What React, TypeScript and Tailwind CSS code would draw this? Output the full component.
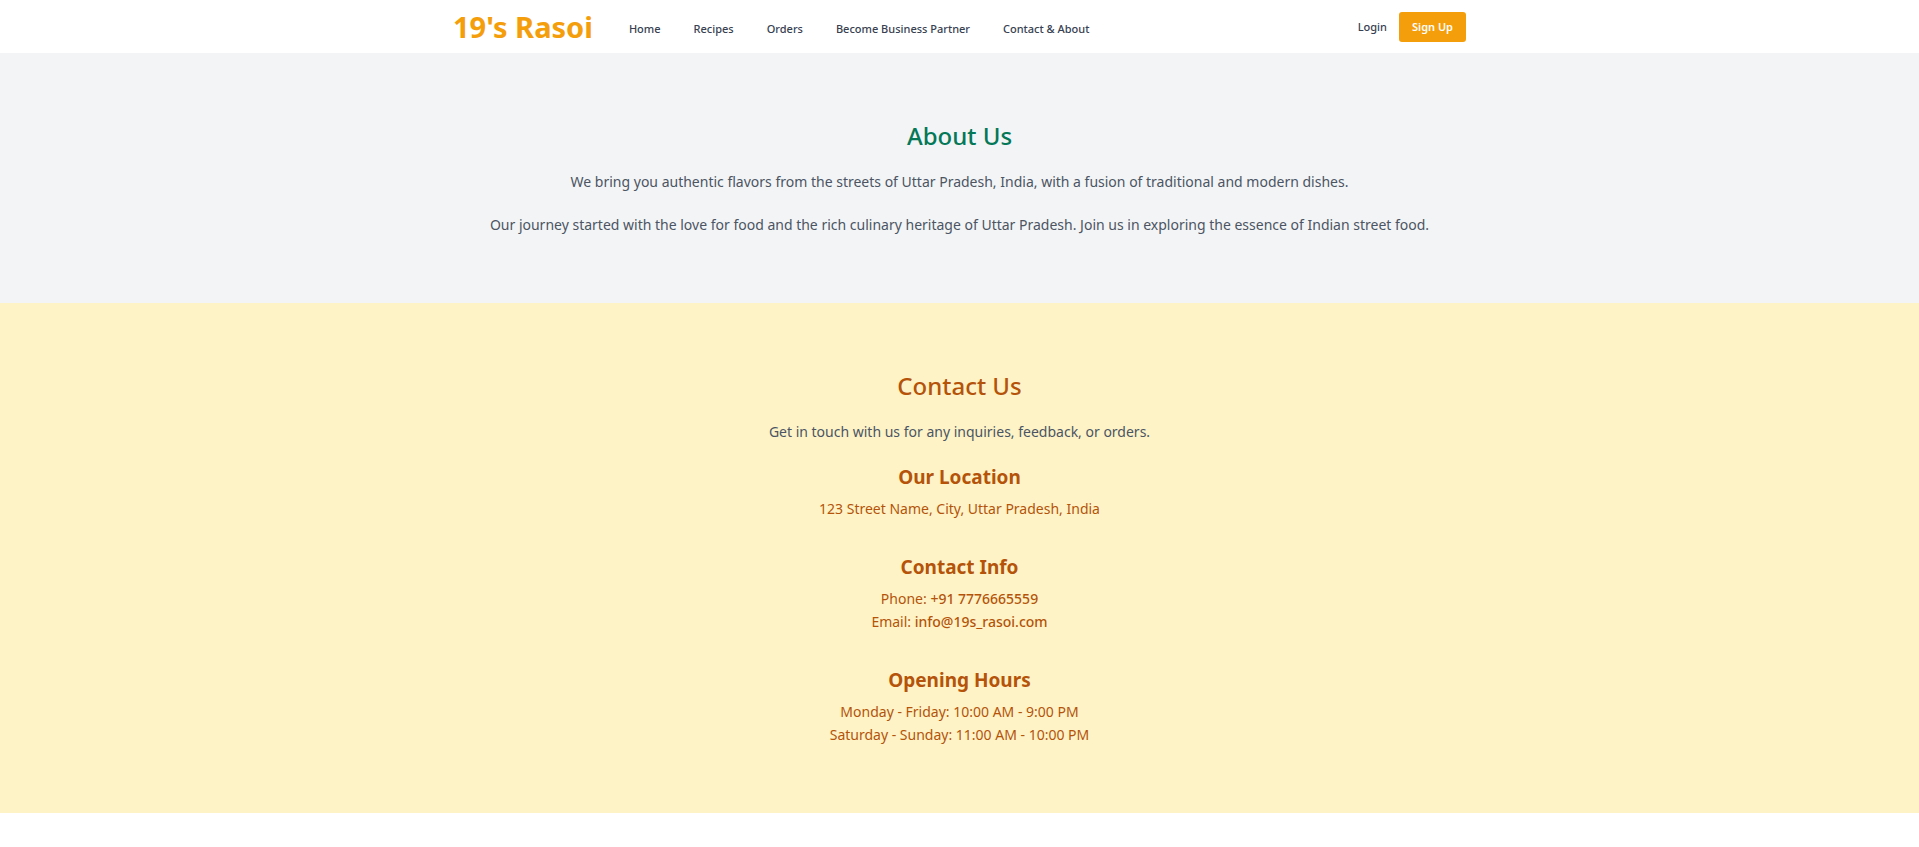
const navLinks = ["Home", "Recipes", "Orders", "Become Business Partner", "Contact & About"];

const details = [
  { title: "Our Location", lines: [{ text: "123 Street Name, City, Uttar Pradesh, India" }] },
  {
    title: "Contact Info",
    lines: [
      { text: "Phone: ", link: "+91 7776665559", href: "tel:+917776665559" },
      { text: "Email: ", link: "info@19s_rasoi.com", href: "mailto:info@19s_rasoi.com" },
    ],
  },
  {
    title: "Opening Hours",
    lines: [
      { text: "Monday - Friday: 10:00 AM - 9:00 PM" },
      { text: "Saturday - Sunday: 11:00 AM - 10:00 PM" },
    ],
  },
] as { title: string; lines: { text: string; link?: string; href?: string }[] }[];

function Header() {
  return (
    <header className="bg-white">
      <div className="mx-auto flex h-[53px] max-w-[1013px] items-center justify-between">
        <div className="flex items-center gap-9">
          <a href="#" className="text-[29px] leading-9 font-bold text-[#f59e0b]">
            19's Rasoi
          </a>
          <nav className="flex gap-[33px] pt-1 text-[11px] leading-4 font-medium text-[#374151]">
            {navLinks.map((label) => (
              <a key={label} href="#">
                {label}
              </a>
            ))}
          </nav>
        </div>
        <div className="flex items-center gap-3 text-[11px] leading-4">
          <a href="#" className="font-medium text-[#374151]">
            Login
          </a>
          <button type="button" className="rounded-[3px] bg-[#f59e0b] px-[13px] py-[7px] font-semibold text-white">
            Sign Up
          </button>
        </div>
      </div>
    </header>
  );
}

export default function App() {
  return (
    <div className="min-h-screen bg-white font-['Noto_Sans',sans-serif]">
      <Header />
      <main className="text-center text-[14px] leading-[23px]">
        <section className="bg-[#f3f4f6] px-4 pt-[65px] pb-[67px] text-[#4b5563]">
          <h2 className="mb-4 text-[24px] leading-9 font-medium text-[#047857]">About Us</h2>
          <p className="mb-5">
            We bring you authentic flavors from the streets of Uttar Pradesh, India, with a fusion of traditional and
            modern dishes.
          </p>
          <p>
            Our journey started with the love for food and the rich culinary heritage of Uttar Pradesh. Join us in
            exploring the essence of Indian street food.
          </p>
        </section>
        <section className="bg-[#fef3c7] px-4 pt-[65px] pb-[67px] text-[#b45309]">
          <h2 className="mb-4 text-[24px] leading-9 font-medium">Contact Us</h2>
          <p className="mb-5 text-[#4b5563]">Get in touch with us for any inquiries, feedback, or orders.</p>
          <div className="flex flex-col gap-[33px]">
            {details.map(({ title, lines }) => (
              <div key={title}>
                <h3 className="mb-1.5 text-[19px] leading-7 font-bold">{title}</h3>
                {lines.map(({ text, link, href }) => (
                  <p key={text}>
                    {text}
                    {link && (
                      <a href={href} className="font-medium">
                        {link}
                      </a>
                    )}
                  </p>
                ))}
              </div>
            ))}
          </div>
        </section>
      </main>
    </div>
  );
}
